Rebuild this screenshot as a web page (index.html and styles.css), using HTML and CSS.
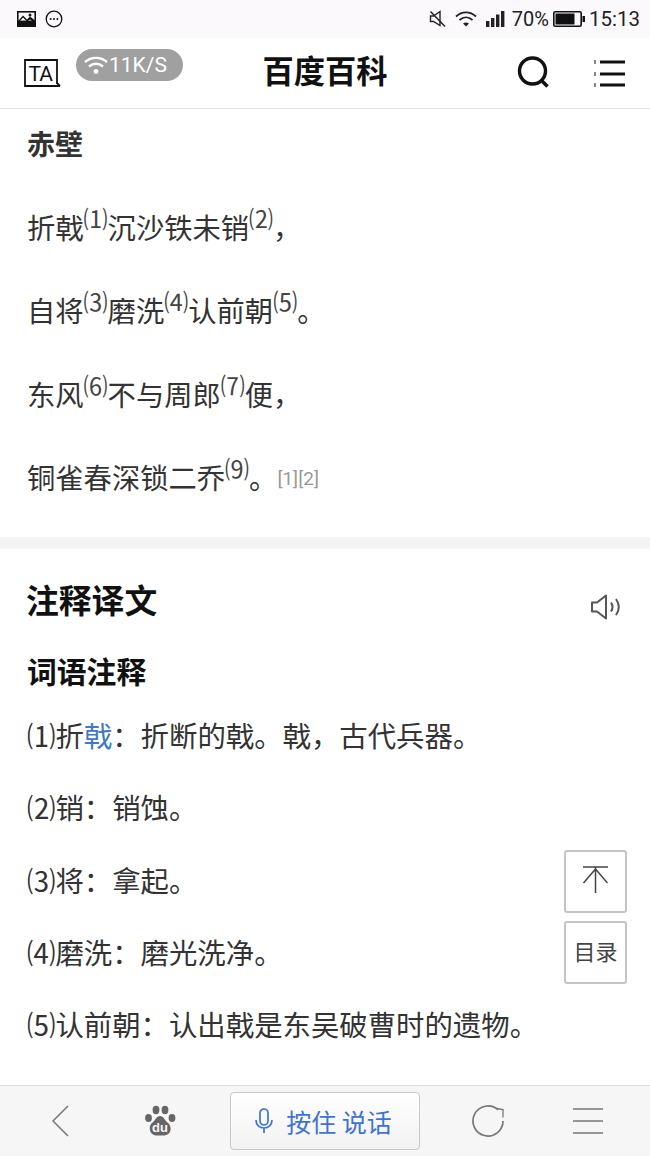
FILE: index.html
```html
<!DOCTYPE html>
<html lang="zh-CN">
<head>
<meta charset="utf-8">
<title>百度百科</title>
<link rel="stylesheet" href="styles.css">
</head>
<body>
<div class="page">
  <div class="status">
    <div class="status-left">
      <svg class="ic-pic" viewBox="0 0 19 16"><rect x="0" y="0" width="19" height="16" fill="#111"/><rect x="1.600" y="1.600" width="15.800" height="8" fill="#fbf9fc"/><path d="M1.600 11.500 6 6.500l4 4 3-2 4.400 3.500v-3L13 5.500l-3 3-4-4-4.400 5z" fill="#111"/><circle cx="13" cy="4" r="1.500" fill="#111"/></svg>
      <svg class="ic-dots" viewBox="0 0 18 18"><circle cx="9" cy="9" r="7.800" fill="none" stroke="#111" stroke-width="1.300"/><circle cx="5.600" cy="9" r="1" fill="#111"/><circle cx="9" cy="9" r="1" fill="#111"/><circle cx="12.400" cy="9" r="1" fill="#111"/></svg>
    </div>
    <div class="status-right">
      <svg class="ic-mute" viewBox="0 0 18 18"><path d="M1.500 6h3L11 1.500v14L4.500 11.500h-3z" fill="none" stroke="#222" stroke-width="1.400"/><path d="M1.500 1.500 16 16.500" stroke="#222" stroke-width="1.500"/></svg>
      <svg class="ic-wifi" viewBox="0 0 24 18"><path d="M2 6.500c6-5.500 14-5.500 20 0M5.500 10c4-3.500 9-3.500 13 0" fill="none" stroke="#222" stroke-width="1.700"/><path d="M9 13.500c2-1.500 4-1.500 6 0L12 16.500z" fill="#222"/></svg>
      <svg class="ic-signal" viewBox="0 0 20 16"><rect x="0" y="10" width="3.400" height="6" fill="#222"/><rect x="5" y="7" width="3.400" height="9" fill="#222"/><rect x="10" y="3.500" width="3.400" height="12.500" fill="#222"/><rect x="15" y="0" width="3.400" height="16" fill="#222"/></svg>
      <span class="pct">70%</span>
      <svg class="ic-batt" viewBox="0 0 32 16"><rect x="0.800" y="0.800" width="27.400" height="14.400" rx="1.500" fill="none" stroke="#111" stroke-width="1.600"/><rect x="2.500" y="2.500" width="19" height="11" fill="#111"/><rect x="29.500" y="5" width="2.500" height="6" fill="#111"/></svg>
      <span class="clock">15:13</span>
    </div>
  </div>

  <header class="topbar">
    <svg class="ic-ta" viewBox="0 0 37 29"><path d="M33 25V1H1v26h35" fill="none" stroke="#111" stroke-width="1.800"/><path d="M33 24l3 3" stroke="#111" stroke-width="1.800"/><text x="4.500" y="22" class="ta-text">TA</text></svg>
    <h1 class="site">百度百科</h1>
    <div class="top-actions">
      <svg class="ic-search" viewBox="0 0 32 32"><circle cx="15.500" cy="15" r="13" fill="none" stroke="#111" stroke-width="3.400"/><path d="M24 24l6.500 6.500" stroke="#111" stroke-width="3.600"/></svg>
      <svg class="ic-list" viewBox="0 0 31 28"><path d="M6 3h25M6 15h25M6 26h25" stroke="#111" stroke-width="3.200"/><path d="M0 2h2M0 4h2M0 14h2M0 16h2M0 25h2M0 27h2" stroke="#111" stroke-width="1"/></svg>
    </div>
    <div class="speed">
      <svg class="ic-speed" viewBox="0 0 26 20"><path d="M2 7c6.500-5.500 15.500-5.500 22 0M6 11.500c4.500-3.500 9.500-3.500 14 0" fill="none" stroke="#fff" stroke-width="2.300"/><circle cx="13" cy="16.500" r="2.400" fill="#fff"/></svg>
      <span>11K/S</span>
    </div>
  </header>

  <main class="content">
    <section class="poem">
      <h2 class="poem-title">赤壁</h2>
      <p>折戟<span class="sup">⑴</span>沉沙铁未销<span class="sup">⑵</span>，</p>
      <p>自将<span class="sup">⑶</span>磨洗<span class="sup">⑷</span>认前朝<span class="sup">⑸</span>。</p>
      <p>东风<span class="sup">⑹</span>不与周郎<span class="sup">⑺</span>便，</p>
      <p>铜雀春深锁二乔<span class="sup">⑼</span>。<span class="ref">[1][2]</span></p>
    </section>
    <div class="band"></div>
    <section class="notes">
      <div class="notes-head">
        <h2 class="notes-title">注释译文</h2>
        <svg class="ic-sound" viewBox="0 0 32 26"><path d="M2 8.500h5L16 1.500v23L7 17.500H2z" fill="none" stroke="#555" stroke-width="2" stroke-linejoin="round"/><path d="M21 8.500c2 3 2 6 0 9M26 5c3.500 5 3.500 11 0 16" fill="none" stroke="#555" stroke-width="2"/></svg>
      </div>
      <h3 class="notes-sub">词语注释</h3>
      <ul class="list">
        <li>⑴折<span class="link">戟</span>：折断的戟。戟，古代兵器。</li>
        <li>⑵销：销蚀。</li>
        <li>⑶将：拿起。</li>
        <li>⑷磨洗：磨光洗净。</li>
        <li>⑸认前朝：认出戟是东吴破曹时的遗物。</li>
      </ul>
    </section>
    <div class="float-top">
      <svg class="ic-top" viewBox="0 0 26 28"><path d="M1 1h25M13.500 1v26M13.500 3 1.500 17M13.500 3l12 14" fill="none" stroke="#444" stroke-width="1.500"/></svg>
    </div>
    <div class="float-toc">目录</div>
  </main>

  <footer class="bottombar">
    <svg class="ic-back" viewBox="0 0 18 32"><path d="M17 1 2 16l15 15" fill="none" stroke="#777" stroke-width="1.500"/></svg>
    <svg class="ic-paw" viewBox="0 0 32 32"><ellipse cx="4.500" cy="13" rx="3.400" ry="4" fill="#666"/><ellipse cx="12" cy="5" rx="3.400" ry="4.200" fill="#666"/><ellipse cx="21" cy="5" rx="3.400" ry="4.200" fill="#666"/><ellipse cx="28" cy="13" rx="3.400" ry="4" fill="#666"/><path d="M16 11c-3.500 0-4.500 4-7 6-3 2.500-3.500 4.500-3 8 .5 4 4 5.500 7 5.500h6c3.500 0 7-1.500 7.500-5.500.5-3.500-.5-5.500-3.500-8-2.500-2-3.500-6-7-6z" fill="#666"/><text x="16" y="27" class="du">du</text></svg>
    <button class="talk" type="button">
      <svg class="ic-mic" viewBox="0 0 20 26"><rect x="6" y="1" width="8" height="16" rx="4" fill="none" stroke="#3f72d8" stroke-width="1.700"/><path d="M2 12c0 5 3.500 8 8 8s8-3 8-8M10 20v5" fill="none" stroke="#3f72d8" stroke-width="1.700"/></svg>
      <span>按住 说话</span>
    </button>
    <svg class="ic-refresh" viewBox="0 0 34 34"><path d="M32 17a15 15 0 1 1-5-11.200" fill="none" stroke="#777" stroke-width="1.700"/><path d="M26 4.500l6 1v8" fill="none" stroke="#777" stroke-width="1.300"/></svg>
    <svg class="ic-menu" viewBox="0 0 30 27"><path d="M0 1h30M0 13h30M0 25h30" stroke="#777" stroke-width="1.700"/></svg>
  </footer>
</div>
</body>
</html>
```
FILE: styles.css
```css
* { box-sizing: border-box; }
html, body { margin: 0; padding: 0; }
body {
  background: #fff;
  font-family: "Noto Sans CJK SC", "Noto Sans", sans-serif;
  color: #333;
}
svg { display: block; flex: none; }
.page {
  width: 650px;
  height: 1156px;
  display: flex;
  flex-direction: column;
  overflow: hidden;
}
.status {
  height: 38px;
  flex: none;
  padding: 0 10px 0 17px;
  background: #fbf9fc;
  display: flex;
  align-items: center;
  justify-content: space-between;
}
.status-left { display: flex; align-items: center; gap: 9px; }
.status-right { display: flex; align-items: center; color: #222; font-family: Roboto, sans-serif; font-size: 20px; }
.ic-pic { width: 19px; height: 16px; }
.ic-dots { width: 18px; height: 18px; }
.ic-mute { width: 18px; height: 18px; margin-right: 7px; }
.ic-wifi { width: 24px; height: 18px; margin-right: 8px; }
.ic-signal { width: 20px; height: 16px; margin-right: 6px; }
.pct { margin-right: 4px; }
.ic-batt { width: 32px; height: 16px; margin-right: 4px; }
.clock { font-size: 20.500px; }

.topbar {
  position: relative;
  height: 71px;
  flex: none;
  padding: 0 25px 0 24px;
  background: #fff;
  border-bottom: 1px solid #e2e2e2;
  display: flex;
  align-items: center;
  justify-content: space-between;
}
.ic-ta { width: 37px; height: 29px; margin-top: 1px; }
.ta-text { font-family: Roboto, sans-serif; font-size: 21px; letter-spacing: -1px; fill: #111; }
.site {
  margin: 0;
  position: absolute;
  left: 0;
  right: 0;
  top: 12px;
  text-align: center;
  font-size: 31.300px;
  line-height: 40px;
  font-weight: 700;
  color: #111;
  pointer-events: none;
}
.top-actions { display: flex; align-items: center; gap: 45px; }
.ic-search { width: 32px; height: 32px; margin-top: -2px; }
.ic-list { width: 31px; height: 28px; }
.speed {
  position: absolute;
  left: 76px;
  top: 11px;
  width: 107px;
  height: 32px;
  border-radius: 16px;
  background: #a0a0a0;
  color: #fff;
  display: flex;
  align-items: center;
  padding-left: 7px;
  font-family: Roboto, sans-serif;
  font-size: 21px;
}
.ic-speed { width: 26px; height: 20px; }

.content {
  position: relative;
  flex: 1;
  min-height: 0;
  overflow: hidden;
}
.poem { padding: 0 27px 18.500px 28px; }
.poem-title {
  margin: -2px 0 5.500px -1px;
  font-size: 28px;
  line-height: 72px;
  font-weight: 700;
  color: #333;
}
.poem p {
  margin: 0 0 0 -1px;
  font-size: 28.300px;
  line-height: 83.500px;
}
.sup {
  font-size: 24px;
  line-height: 0;
  vertical-align: 11px;
  color: #444;
}
.ref {
  font-size: 19px;
  line-height: 0;
  vertical-align: 4px;
  color: #999;
  font-family: Roboto, sans-serif;
}
.band { height: 12px; background: #f4f4f4; }
.notes { padding: 0 28px; }
.notes-head {
  height: 100px;
  display: flex;
  align-items: center;
  justify-content: space-between;
}
.notes-title {
  margin: 0 0 0 -2px;
  font-size: 32.800px;
  line-height: 40px;
  font-weight: 700;
  color: #111;
}
.ic-sound { width: 32px; height: 26px; margin-top: 16px; }
.notes-sub {
  margin: 1px 0 0 -1px;
  font-size: 29.800px;
  line-height: 40px;
  font-weight: 700;
  color: #111;
}
.list {
  list-style: none;
  margin: 9px 0 0 -1px;
  padding: 0;
  font-size: 28.400px;
  line-height: 72.300px;
}
.link { color: #3f78c8; }
.float-top, .float-toc {
  position: absolute;
  left: 564px;
  width: 63px;
  height: 63px;
  border: 2px solid #c4c4c4;
  border-radius: 3px;
  background: #fff;
  display: flex;
  align-items: center;
  justify-content: center;
}
.float-top { top: 741px; padding: 0 1px 3px 0; }
.float-toc { top: 812px; padding-bottom: 5px; font-size: 22px; color: #444; }
.ic-top { width: 26px; height: 28px; }

.bottombar {
  height: 71px;
  flex: none;
  background: #f6f6f6;
  border-top: 1px solid #dcdcdc;
  display: grid;
  grid-template-columns: 120px 80px 250px 76px 124px;
  align-items: center;
  justify-items: center;
}
.ic-back { width: 18px; height: 32px; }
.ic-paw { width: 32px; height: 32px; }
.talk {
  width: 190px;
  height: 58px;
  padding: 0 4px 0 0;
  border: 1px solid #c8c8c8;
  border-radius: 4px;
  background: linear-gradient(#fff, #f2f2f2);
  color: #3f72d8;
  font-family: inherit;
  font-size: 25px;
  display: flex;
  align-items: center;
  justify-content: center;
  gap: 12px;
}
.ic-mic { width: 20px; height: 26px; }
.du { font-family: "Liberation Sans", sans-serif; font-size: 13px; font-weight: 700; fill: #f6f6f6; text-anchor: middle; }
.ic-refresh { width: 34px; height: 34px; }
.ic-menu { width: 30px; height: 27px; }
```
